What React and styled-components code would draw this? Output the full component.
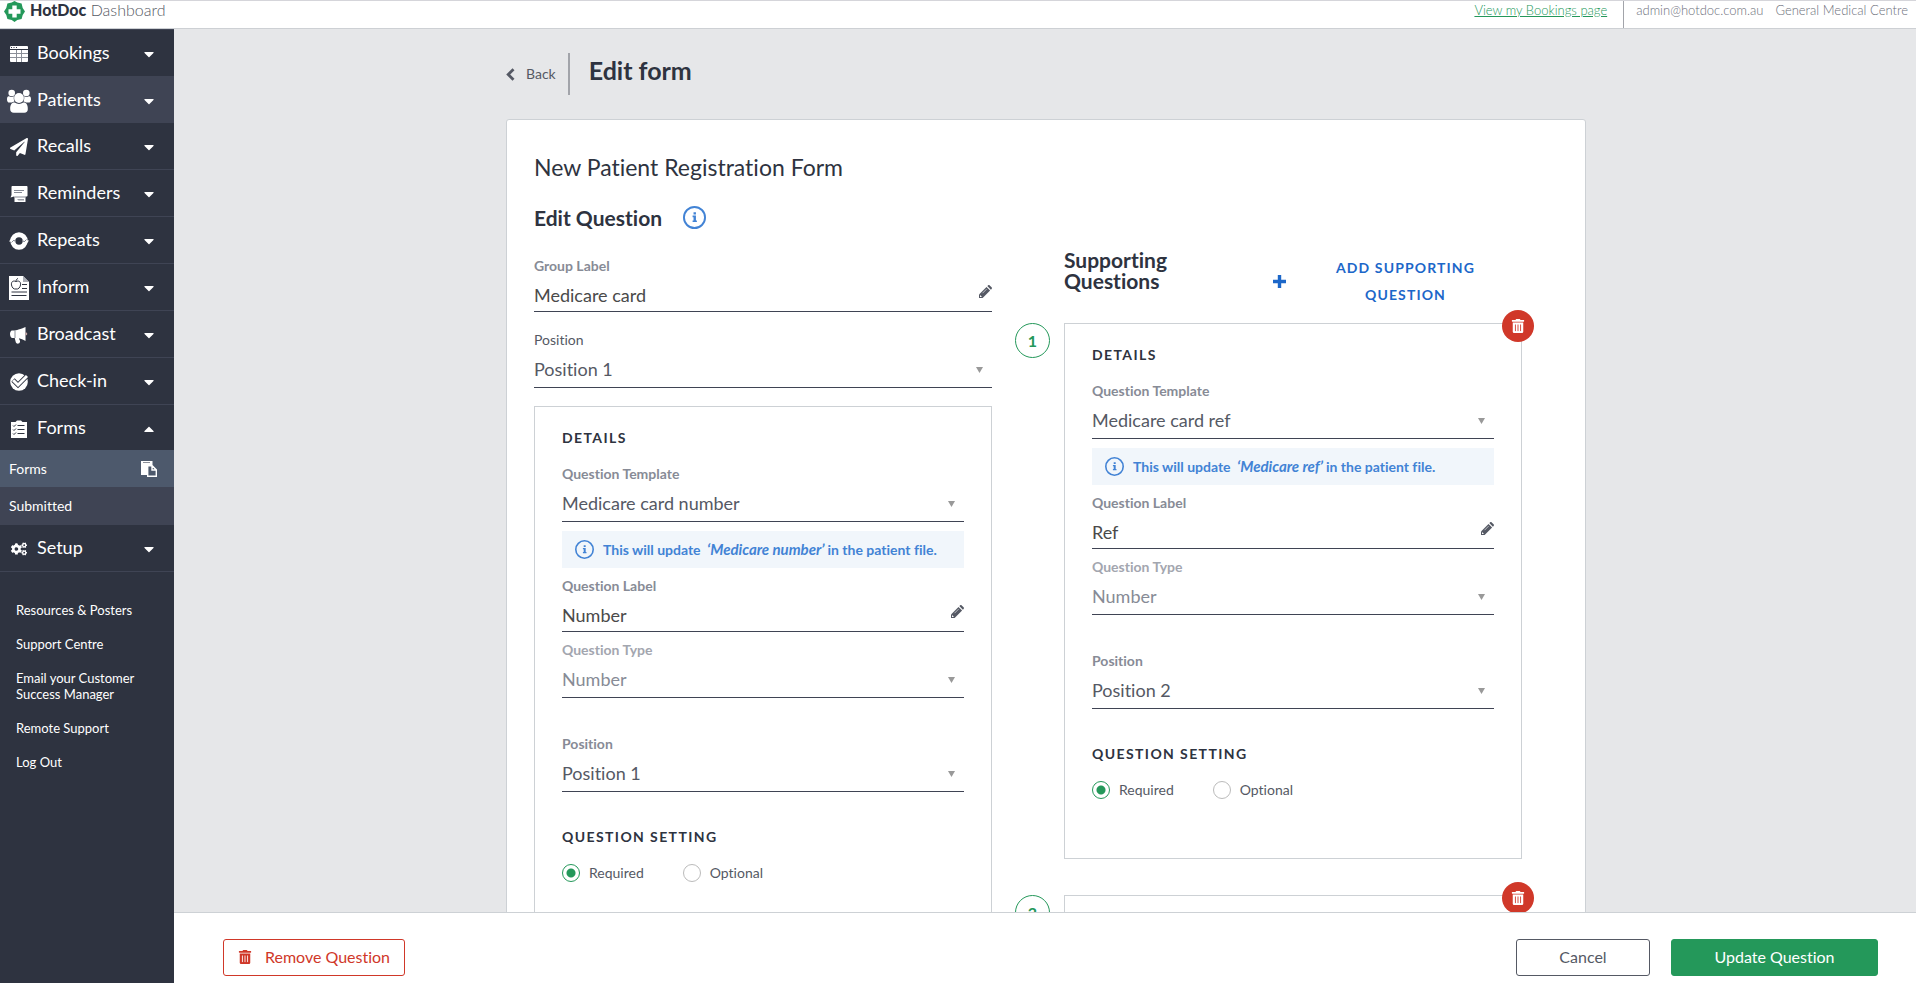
import React from "react";
import styled, { createGlobalStyle } from "styled-components";
import {
  FaCaretDown,
  FaCaretUp,
  FaCogs,
  FaPaperPlane,
  FaTrashAlt,
} from "react-icons/fa";

const colors = {
  navy: "#2e3340",
  navyLight: "#3f4454",
  slate: "#4d596c",
  text: "#555964",
  muted: "#878b96",
  faded: "#a3a6af",
  line: "#3f4454",
  border: "#cdd1d5",
  page: "#e6e7e9",
  green: "#24985a",
  red: "#d03829",
  blue: "#1c67c9",
  blueSoft: "#4283d5",
  blueTint: "#f1f6fb",
};

// Icons

const LogoIcon = () => (
  <svg width="21" height="21" viewBox="0 0 21 21" aria-hidden="true">
    <path
      d="M10.500 0 13.300 1.600 17.600 2.600 18.700 7 21 10.500 18.700 14 17.600 18 13.300 19 10.500 21 7.700 19 3.400 18 2.300 14 0 10.500 2.300 7 3.400 2.600 7.700 1.600Z"
      fill={colors.green}
    />
    <path d="M8.300 4.500h4.400v3.800h3.800v4.400h-3.800v3.800H8.300v-3.800H4.500V8.300h3.800z" fill="#fff" />
  </svg>
);

const BookingsIcon = () => (
  <svg width="18" height="16" viewBox="0 0 18 16" aria-hidden="true">
    <rect width="18" height="16" rx="1" fill="#fff" />
    <path d="M1 1.500h1M3.500 1.500h1M6 1.500h1" stroke={colors.navy} />
    <path d="M0 3.500h18" stroke={colors.navy} />
    <path d="M6.500 4v12M11.500 4v12M0 7.500h18M0 11.500h18" stroke="#8b8f98" />
  </svg>
);

const PatientsIcon = () => (
  <svg width="24" height="24" viewBox="0 0 24 24" fill="#fff" aria-hidden="true">
    <circle cx="4.700" cy="4" r="3.300" />
    <circle cx="19.300" cy="4" r="3.300" />
    <path d="M0 10.500C0 8 .8 7 2 7.200c1.500.9 3.400.9 5 0-.7 2 0 3.700.4 5.300-1 .2-1.900.6-2.600 1.100H2.500c-1.600 0-2.500-1-2.500-3.100z" />
    <path d="M24 10.500c0-2.500-.8-3.500-2-3.300-1.500.9-3.400.9-5 0 .7 2 0 3.700-.4 5.300 1 .2 1.900.6 2.600 1.100h2.300c1.600 0 2.500-1 2.500-3.100z" />
    <circle cx="12" cy="9" r="4.900" />
    <path d="M3.200 20.200c0-4.500 1.500-6.900 4.500-6.600 2.600 1.700 6 1.700 8.600 0 3-.3 4.500 2.100 4.500 6.600 0 2.200-1.300 3.500-3.500 3.500H6.700c-2.200 0-3.500-1.300-3.500-3.500z" />
  </svg>
);

const RemindersIcon = () => (
  <svg width="18" height="18" viewBox="0 0 18 18" aria-hidden="true">
    <path d="M4.500 9h11v8h-11z" fill="#fff" />
    <path d="M2.500 1h14c.6 0 1 .4 1 1v8.500c0 .6-.4 1-1 1H4L.5 12.500l1-2.500V2c0-.6.400-1 1-1z" fill="#fff" />
    <path d="M4 5.500h10M4 7.500h8M5 12h10.500" stroke="#858995" />
    <path d="M7 14h7v1.500H8.500z" fill="#9a9da6" />
  </svg>
);

const RepeatsIcon = () => (
  <svg width="20" height="18" viewBox="0 0 20 18" aria-hidden="true">
    <circle cx="10" cy="9" r="6.200" fill="none" stroke="#fff" strokeWidth="5" />
    <path d="M0 9.500 2.500 6 5.500 9.500zM20 8.500 17.500 12l-3-3.500z" fill="#fff" />
    <path d="M2.500 10.500 5 8l1.500 2M17.500 7.500 15 10l-1.500-2" fill="none" stroke="#8b8f98" />
  </svg>
);

const InformIcon = () => (
  <svg width="20" height="24" viewBox="0 0 20 24" aria-hidden="true">
    <path d="M0 0h14l6 6v18H0z" fill="#fff" />
    <path d="M14 0v6h6z" fill="#a9acb4" />
    <path
      d="M7 5.500C3.500 4 2 6.500 2.500 9c.5 2.500 2 4.500 4.500 4 2.500.5 4-1.500 4.500-4 .5-2.500-1-5-4.500-3.500zM7 5.500c0-1.500.5-2.500 2-3"
      fill="none"
      stroke={colors.navy}
    />
    <path d="M13 8.500h5M13 12.500h5M2.500 16h15.500M2.500 19.500h15" stroke={colors.navy} />
  </svg>
);

const BroadcastIcon = () => (
  <svg width="18" height="17" viewBox="0 0 18 17" aria-hidden="true">
    <path
      d="M2 3.500C4.500 3.700 6 3.500 8.500 2.600 11 1.800 13 1.200 15.500 0v14c-2.500-1.500-4.500-2.300-6.500-2.700.2 1 .4 1.700 1 2.400.2 1.300-.3 2.300-1.600 2.900-1.200.3-2.200-.2-2.600-1.300L4.700 11H2C.8 11 0 8.500 0 7s.8-3.500 2-3.500z"
      fill="#fff"
    />
    <path d="M5 3.500V11" stroke="#8b8f98" />
    <path d="M15.500 5.300c2.300.2 2.300 3 0 3.200z" fill="#c9aaa8" />
  </svg>
);

const CheckInIcon = () => (
  <svg width="18" height="18" viewBox="0 0 18 18" aria-hidden="true">
    <circle cx="9" cy="9" r="8.800" fill="#fff" />
    <path d="m3 7 5 5 9.500-9.500" fill="none" stroke={colors.navy} strokeWidth="4.600" />
    <path d="m3.200 7.200 4.800 4.800L17 3" fill="none" stroke="#fff" strokeWidth="3" />
  </svg>
);

const FormsIcon = () => (
  <svg width="16" height="18" viewBox="0 0 16 18" aria-hidden="true">
    <path d="M0 2h4.500L6 .5h4L11.500 2H16v16H0z" fill="#fff" />
    <path d="M6.500 5.500h7M6.500 9.500h7M6.500 13.500h7" stroke={colors.navy} />
    <path d="m2 5.500 1 1 2-2M2 9.500l1 1 2-2M2 13.500l1 1 2-2" fill="none" stroke={colors.navy} />
  </svg>
);

const PasteIcon = () => (
  <svg width="16" height="16" viewBox="0 0 16 16" aria-hidden="true">
    <path d="M0 0h11.500v4H6v10H0z" fill="#fff" />
    <path d="M2 1.500h7" stroke="#8b8f98" />
    <path d="M6.700 4.700h4.500l4.100 4.200v6.400H6.700zM11 5v4h4" fill="none" stroke="#fff" strokeWidth="1.400" />
  </svg>
);

const BackIcon = () => (
  <svg width="9" height="13" viewBox="0 0 9 13" aria-hidden="true">
    <path d="M7.500 1.200 2.200 6.500l5.300 5.300" fill="none" stroke={colors.text} strokeWidth="2.800" />
  </svg>
);

const PencilIcon = () => (
  <svg width="13" height="13" viewBox="0 0 13 13" aria-hidden="true">
    <path d="M0 9.400 7.500 1.900l3.600 3.600L3.600 13H0z" fill={colors.text} />
    <path d="M8.300 1.100 9 .4c.6-.5 1.200-.5 1.700 0l1.900 1.900c.5.5.5 1.100 0 1.700l-.7.7z" fill={colors.text} />
    <path d="M3.500 8.200 7.600 4.100" stroke="#b9bbc1" />
    <path d="m1 10 2 2H1z" fill="#fff" />
  </svg>
);

const PlusIcon = () => (
  <svg width="13" height="13" viewBox="0 0 13 13" aria-hidden="true">
    <path d="M6.500 0v13M0 6.500h13" stroke={colors.blue} strokeWidth="3.400" />
  </svg>
);

const InfoIcon = ({ size }) => (
  <svg width={size} height={size} viewBox="0 0 24 24" aria-hidden="true">
    <circle cx="12" cy="12" r="11" fill="none" stroke={colors.blueSoft} strokeWidth="2" />
    <path d="M11 6.500h2.500v2.300H11zM10 10h3.500v5h1v1.700H10V15h1v-3.300h-1z" fill={colors.blueSoft} />
  </svg>
);

const TriangleIcon = () => (
  <svg width="7" height="6" viewBox="0 0 7 6" aria-hidden="true">
    <path d="M0 0h7L3.500 6z" fill="#999" />
  </svg>
);

// Data

const navItems = [
  { label: "Bookings", icon: <BookingsIcon /> },
  { label: "Patients", icon: <PatientsIcon />, active: true },
  { label: "Recalls", icon: <FaPaperPlane size={18} /> },
  { label: "Reminders", icon: <RemindersIcon /> },
  { label: "Repeats", icon: <RepeatsIcon /> },
  { label: "Inform", icon: <InformIcon /> },
  { label: "Broadcast", icon: <BroadcastIcon /> },
  { label: "Check-in", icon: <CheckInIcon /> },
  { label: "Forms", icon: <FormsIcon />, open: true },
  { label: "Setup", icon: <FaCogs size={16} /> },
];

const navLinks = [
  "Resources & Posters",
  "Support Centre",
  "Email your Customer Success Manager",
  "Remote Support",
  "Log Out",
];

const mainQuestion = {
  id: "main",
  template: "Medicare card number",
  field: "Medicare number",
  label: "Number",
  type: "Number",
  position: "Position 1",
};

const supportingQuestions = [
  {
    id: "ref",
    template: "Medicare card ref",
    field: "Medicare ref",
    label: "Ref",
    type: "Number",
    position: "Position 2",
  },
  {
    id: "expiry",
    template: "Medicare card expiry",
    field: "Medicare expiry",
    label: "Expiry",
    type: "Date",
    position: "Position 3",
  },
];

// Form parts

const TextField = ({ id, label, value }) => (
  <Field>
    <Label htmlFor={id}>{label}</Label>
    <Control>
      <TextInput id={id} type="text" defaultValue={value} />
      <PencilMark>
        <PencilIcon />
      </PencilMark>
    </Control>
  </Field>
);

const SelectField = ({ id, label, value, plain, disabled, spaced }) => (
  <Field $spaced={spaced}>
    <Label htmlFor={id} $plain={plain} $disabled={disabled}>
      {label}
    </Label>
    <Control>
      <Select id={id} defaultValue={value} disabled={disabled}>
        <option>{value}</option>
      </Select>
      <SelectMark>
        <TriangleIcon />
      </SelectMark>
    </Control>
  </Field>
);

const QuestionFields = ({ question }) => {
  const { id, template, field, label, type, position } = question;
  return (
    <>
      <SectionTitle>Details</SectionTitle>
      <SelectField id={`${id}-template`} label="Question Template" value={template} />
      <Notice>
        <InfoIcon size={19} />
        <span>
          This will update <em>‘{field}’</em>in the patient file.
        </span>
      </Notice>
      <TextField id={`${id}-label`} label="Question Label" value={label} />
      <SelectField id={`${id}-type`} label="Question Type" value={type} disabled />
      <SelectField id={`${id}-position`} label="Position" value={position} spaced />
      <Setting>
        <SectionTitle as="legend">Question Setting</SectionTitle>
        <RadioRow>
          <RadioLabel>
            <Radio type="radio" name={`${id}-setting`} defaultChecked />
            Required
          </RadioLabel>
          <RadioLabel>
            <Radio type="radio" name={`${id}-setting`} />
            Optional
          </RadioLabel>
        </RadioRow>
      </Setting>
    </>
  );
};

const App = () => {
  return (
    <Shell>
      <GlobalStyle />
      <TopBar>
        <Brand>
          <LogoIcon />
          <BrandName>
            <strong>HotDoc</strong> Dashboard
          </BrandName>
        </Brand>
        <BookingsLink href="#bookings">View my Bookings page</BookingsLink>
        <Account>
          <span>admin@hotdoc.com.au</span>
          <span>General Medical Centre</span>
        </Account>
      </TopBar>
      <Body>
        <Sidebar>
          {navItems.map((item) => (
            <React.Fragment key={item.label}>
              <NavItem type="button" $active={item.active} $open={item.open}>
                <NavIcon>{item.icon}</NavIcon>
                <NavLabel>{item.label}</NavLabel>
                {item.open ? <FaCaretUp size={16} /> : <FaCaretDown size={16} />}
              </NavItem>
              {item.open && (
                <>
                  <SubItem href="#forms" $current>
                    Forms
                    <PasteIcon />
                  </SubItem>
                  <SubItem href="#submitted">Submitted</SubItem>
                </>
              )}
            </React.Fragment>
          ))}
          <NavLinks>
            {navLinks.map((link) => (
              <NavLink key={link} href="#link">
                {link}
              </NavLink>
            ))}
          </NavLinks>
        </Sidebar>
        <Content>
          <Scroll>
            <Page>
              <PageHeader>
                <BackLink href="#back">
                  <BackIcon />
                  Back
                </BackLink>
                <PageTitle>Edit form</PageTitle>
              </PageHeader>
              <Card>
                <FormName>New Patient Registration Form</FormName>
                <HeadingRow>
                  <Heading>Edit Question</Heading>
                  <InfoIcon size={23} />
                </HeadingRow>
                <Columns>
                  <Column>
                    <TextField id="group-label" label="Group Label" value="Medicare card" />
                    <SelectField id="group-position" label="Position" value="Position 1" plain />
                    <Panel>
                      <QuestionFields question={mainQuestion} />
                    </Panel>
                  </Column>
                  <div>
                    <SupportingHeader>
                      <Heading>Supporting Questions</Heading>
                      <AddButton type="button">
                        <PlusIcon />
                        <span>Add supporting question</span>
                      </AddButton>
                    </SupportingHeader>
                    <SupportingList>
                      {supportingQuestions.map((question, index) => (
                        <Panel as="li" key={question.id}>
                          <StepBadge>{index + 1}</StepBadge>
                          <DeleteButton type="button" aria-label="Remove">
                            <FaTrashAlt size={14} />
                          </DeleteButton>
                          <QuestionFields question={question} />
                        </Panel>
                      ))}
                    </SupportingList>
                  </div>
                </Columns>
              </Card>
            </Page>
          </Scroll>
          <Footer>
            <RemoveButton type="button">
              <FaTrashAlt size={14} />
              Remove Question
            </RemoveButton>
            <CancelButton type="button">Cancel</CancelButton>
            <UpdateButton type="button">Update Question</UpdateButton>
          </Footer>
        </Content>
      </Body>
    </Shell>
  );
};

export default App;

// Styled Components
const GlobalStyle = createGlobalStyle`
  * {
    box-sizing: border-box;
  }

  body {
    margin: 0;
    font-family: Lato, "Liberation Sans", sans-serif;
    font-size: 14px;
    font-variant-ligatures: none;
    line-height: 20px;
    color: ${colors.text};
  }

  button,
  input,
  select {
    font-family: inherit;
    font-variant-ligatures: inherit;
  }

  a {
    color: inherit;
    text-decoration: none;
  }
`;

const Shell = styled.div`
  display: flex;
  flex-direction: column;
  height: 100vh;
`;

const TopBar = styled.header`
  display: flex;
  flex: none;
  height: 29px;
  padding: 0 8px 0 4px;
  border-top: 1px solid #d5d5da;
  border-bottom: 1px solid #cdd0d4;
  background: #fff;
  font-size: 13px;
  font-weight: 300;
  line-height: 18px;
`;

const Brand = styled.div`
  display: flex;
  align-items: flex-start;
  gap: 5px;
  margin-right: auto;
`;

const BrandName = styled.span`
  font-size: 16px;

  strong {
    font-weight: 900;
    color: ${colors.navy};
  }
`;

const BookingsLink = styled.a`
  margin-right: 16px;
  color: ${colors.green};
  text-decoration: underline;
`;

const Account = styled.div`
  display: flex;
  gap: 12px;
  padding-left: 12px;
  border-left: 1px solid #a2a4aa;
  color: #6d707b;
`;

const Body = styled.div`
  display: flex;
  flex: 1;
  min-height: 0;
`;

const Sidebar = styled.nav`
  display: flex;
  flex: none;
  flex-direction: column;
  width: 174px;
  background: ${colors.navy};
  color: #fff;
`;

const NavItem = styled.button`
  display: flex;
  align-items: center;
  height: ${({ $active, $open }) => ($active || $open ? "46px" : "47px")};
  padding: 2px 17px 0 0;
  border: 0;
  border-top: 1px solid ${colors.navyLight};
  background: ${({ $active }) => ($active ? colors.navyLight : "transparent")};
  color: #fff;
  font-size: 18px;
  text-align: left;
`;

const NavIcon = styled.span`
  display: flex;
  justify-content: center;
  width: 37px;
`;

const NavLabel = styled.span`
  flex: 1;
  margin-bottom: 4px;
`;

const SubItem = styled.a`
  display: flex;
  align-items: center;
  justify-content: space-between;
  height: 37px;
  padding: 0 17px 0 9px;
  background: ${({ $current }) => ($current ? colors.slate : colors.navyLight)};
`;

const NavLinks = styled.div`
  display: flex;
  flex-direction: column;
  gap: 18px;
  padding: 30px 30px 0 16px;
  border-top: 1px solid ${colors.navyLight};
`;

const NavLink = styled.a`
  font-size: 13px;
  line-height: 16px;
`;

const Content = styled.div`
  display: flex;
  flex: 1;
  flex-direction: column;
  min-width: 0;
`;

const Scroll = styled.main`
  flex: 1;
  min-height: 0;
  overflow-y: auto;
  scrollbar-width: none;
  padding: 0 30px 0 32px;
  background: ${colors.page};
`;

const Page = styled.div`
  max-width: 1080px;
  margin: 0 auto;
  padding: 24px 0 40px;
`;

const PageHeader = styled.div`
  display: flex;
  margin-bottom: 24px;
`;

const BackLink = styled.a`
  display: flex;
  align-items: center;
  gap: 11px;
  height: 42px;
  padding-right: 12px;
  border-right: 2px solid #a2a4aa;
`;

const PageTitle = styled.h1`
  margin: 0 0 0 19px;
  font-size: 25px;
  line-height: 34px;
  color: ${colors.navy};
`;

const Card = styled.section`
  padding: 31px 63px 60px 27px;
  border: 1px solid ${colors.border};
  border-radius: 3px;
  background: #fff;
`;

const FormName = styled.h2`
  margin: 0;
  font-size: 23px;
  font-weight: 400;
  line-height: 32px;
  color: ${colors.navy};
`;

const HeadingRow = styled.div`
  display: flex;
  align-items: center;
  gap: 21px;
  margin: 23px 0 20px;
`;

const Heading = styled.h3`
  margin: 0;
  font-size: 21px;
  line-height: 21px;
  color: ${colors.navy};
`;

const Columns = styled.div`
  display: grid;
  grid-template-columns: 1fr 1fr;
  align-items: start;
  gap: 72px;
`;

const Column = styled.div`
  display: flex;
  flex-direction: column;
  gap: 18px;
  padding-top: 7px;
`;

const SupportingHeader = styled.div`
  display: flex;
  justify-content: space-between;
  height: 74px;
  padding-right: 27px;

  ${Heading} {
    width: 160px;
  }
`;

const AddButton = styled.button`
  display: flex;
  align-items: center;
  width: 222px;
  height: 64px;
  padding: 0;
  border: 0;
  background: none;
  color: ${colors.blue};
  font-size: 14px;
  font-weight: 700;
  letter-spacing: 0.08em;
  line-height: 27px;
  text-transform: uppercase;

  span {
    flex: 1;
    padding: 0 14px 0 44px;
  }
`;

const SupportingList = styled.ol`
  display: flex;
  flex-direction: column;
  gap: 36px;
  margin: 0;
  padding: 0;
  list-style: none;
`;

const Panel = styled.div`
  position: relative;
  display: flex;
  flex-direction: column;
  gap: 8px;
  padding: 21px 27px 58px;
  border: 1px solid ${colors.border};
`;

const StepBadge = styled.span`
  position: absolute;
  top: -1px;
  left: -50px;
  width: 35px;
  height: 35px;
  border: 1px solid ${colors.green};
  border-radius: 50%;
  color: ${colors.green};
  font-size: 16px;
  font-weight: 700;
  line-height: 33px;
  text-align: center;
`;

const DeleteButton = styled.button`
  position: absolute;
  top: -14px;
  right: -13px;
  display: flex;
  align-items: center;
  justify-content: center;
  width: 32px;
  height: 32px;
  padding: 0;
  border: 0;
  border-radius: 50%;
  background: ${colors.red};
  color: #fff;
`;

const SectionTitle = styled.h4`
  margin: 0 0 8px;
  padding: 0;
  font-size: 14px;
  font-weight: 700;
  letter-spacing: 0.1em;
  line-height: 20px;
  text-transform: uppercase;
  color: ${colors.navy};
`;

const Field = styled.div`
  display: flex;
  flex-direction: column;
  margin-top: ${({ $spaced }) => ($spaced ? "28px" : "0")};
`;

const Label = styled.label`
  font-weight: ${({ $plain }) => ($plain ? 400 : 700)};
  color: ${({ $plain, $disabled }) =>
    $plain ? colors.text : $disabled ? colors.faded : colors.muted};
`;

const Control = styled.div`
  position: relative;
  display: flex;
`;

const TextInput = styled.input`
  flex: 1;
  min-width: 0;
  height: 36px;
  padding: 3px 24px 0 0;
  border: 0;
  border-bottom: 1px solid ${colors.line};
  background: none;
  color: #4a4a4a;
  font-size: 18px;
`;

const Select = styled.select`
  flex: 1;
  min-width: 0;
  height: 38px;
  padding: 0 24px 0 0;
  border: 0;
  border-bottom: 1px solid ${colors.line};
  border-radius: 0;
  background: none;
  appearance: none;
  color: ${colors.text};
  font-size: 18px;

  &:disabled {
    color: ${colors.muted};
    opacity: 1;
  }
`;

const PencilMark = styled.span`
  position: absolute;
  top: 9px;
  right: 0;
  display: flex;
`;

const SelectMark = styled.span`
  position: absolute;
  top: 17px;
  right: 9px;
  display: flex;
  pointer-events: none;
`;

const Notice = styled.p`
  display: flex;
  align-items: center;
  gap: 9px;
  height: 37px;
  margin: 1px 0 0;
  padding: 0 13px;
  background: ${colors.blueTint};
  color: ${colors.blueSoft};
  font-weight: 700;

  em {
    margin: 0 3px;
    font-size: 15px;
  }
`;

const Setting = styled.fieldset`
  margin: 27px 0 0;
  padding: 0;
  border: 0;
`;

const RadioRow = styled.div`
  display: flex;
  gap: 39px;
  padding-top: 8px;
`;

const RadioLabel = styled.label`
  display: flex;
  align-items: center;
  gap: 9px;
`;

const Radio = styled.input`
  width: 18px;
  height: 18px;
  margin: 0;
  border: 1px solid #bbb;
  border-radius: 50%;
  appearance: none;

  &:checked {
    border-color: ${colors.green};
    background: radial-gradient(${colors.green} 4px, #fff 5px);
  }
`;

const Footer = styled.footer`
  display: flex;
  flex: none;
  gap: 21px;
  padding: 26px 38px 7px 49px;
  border-top: 1px solid ${colors.border};
  background: #fff;
`;

const Button = styled.button`
  display: flex;
  align-items: center;
  justify-content: center;
  height: 37px;
  padding: 0 0 2px;
  border: 1px solid currentColor;
  border-radius: 3px;
  background: #fff;
  font-size: 16px;
`;

const RemoveButton = styled(Button)`
  gap: 13px;
  width: 182px;
  margin-right: auto;
  color: ${colors.red};
`;

const CancelButton = styled(Button)`
  width: 134px;
  color: ${colors.text};
`;

const UpdateButton = styled(Button)`
  width: 207px;
  border-color: ${colors.green};
  background: ${colors.green};
  color: #fff;
`;
